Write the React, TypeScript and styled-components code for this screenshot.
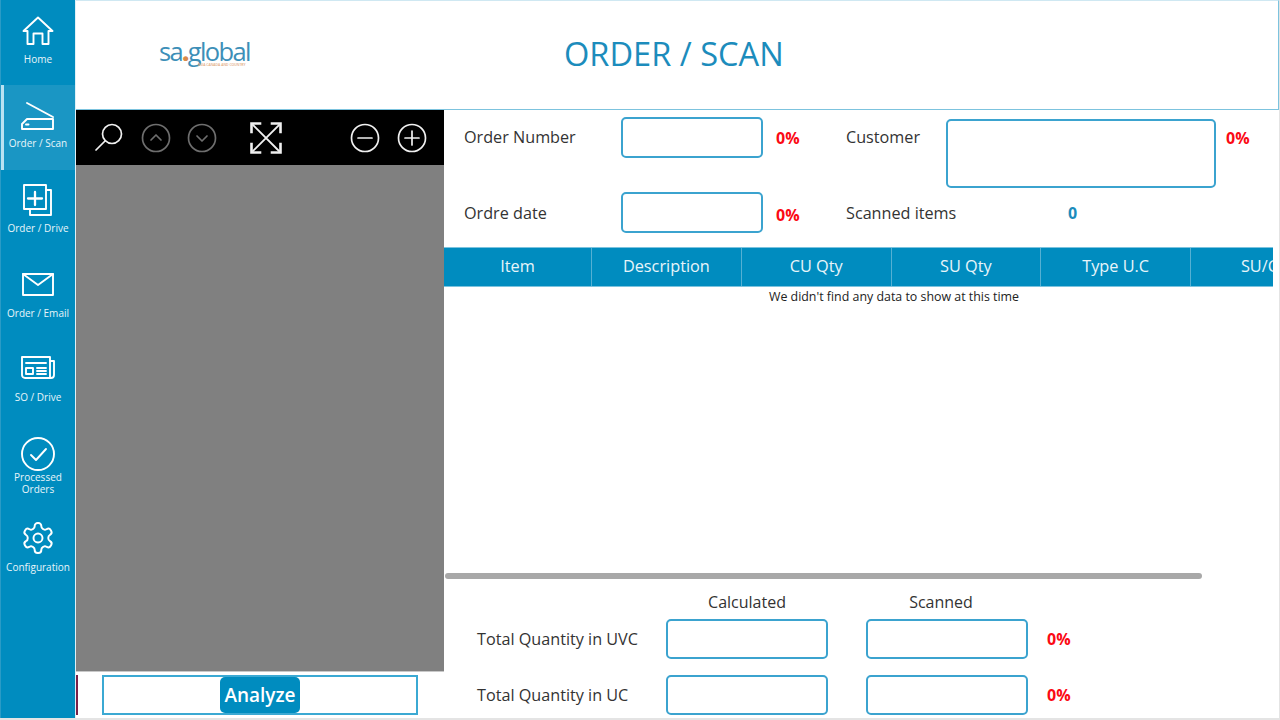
import React from "react";
import styled, { createGlobalStyle } from "styled-components";

const Global = createGlobalStyle`
  html, body { margin: 0; padding: 0; width: 1280px; height: 720px; overflow: hidden; background: #fff; }
  * { box-sizing: border-box; }
  body { font-family: "Open Sans", "Liberation Sans", sans-serif; }
`;

const Page = styled.div`
  width: 1280px; height: 720px; display: grid; grid-template-columns: 76px 1fr; overflow: hidden;
  border-bottom: 2px solid #e4e4e4; border-right: 1px solid #e4e4e4;
`;
const Sidebar = styled.nav`
  background: #008cbf; display: flex; flex-direction: column; border-left: 1px solid #2a9bc6; border-right: 1px solid #dff0f7;
`;
const NavItem = styled.div<{ $active?: boolean; $top: number }>`
  height: 85px; display: flex; flex-direction: column; align-items: center;
  padding-top: ${p => p.$top}px;
  background: ${p => (p.$active ? "#1a96c4" : "transparent")};
  border-left: 3px solid ${p => (p.$active ? "#b9e2f2" : "transparent")};
  padding-right: 3px;
`;
const NavIcon = styled.svg`
  width: 36px; height: 36px; flex: none; fill: none; stroke: #fff; stroke-width: 1.9; stroke-linejoin: round; stroke-linecap: round;
`;
const NavLabel = styled.span<{ $gap: number }>`
  margin-top: ${p => p.$gap}px;
  color: #e8f5fa; font-size: 10px; line-height: 12px; text-align: center; width: 74px; white-space: pre-line;
`;

const Main = styled.div`
  display: grid; grid-template-rows: 110px 1fr; min-width: 0;
`;
const Header = styled.header`
  display: grid; grid-template-columns: 395px 1fr; align-items: center;
  border: 1px solid #7cc3de; border-left: none; border-top-color: #cfe8f2; background: #fff;
`;
const Logo = styled.div`
  display: flex; flex-direction: column; align-items: flex-start; padding: 0 0 6px 83px;
`;
const LogoMark = styled.div`
  font-size: 25.5px; line-height: 26px; letter-spacing: -1.65px; color: #3d8fb8; font-weight: 500; white-space: nowrap;
`;
const LogoDot = styled.span`color: #d98a4a; font-weight: 800;`;
const LogoTag = styled.div`
  font-size: 3.4px; line-height: 4px; margin: -1px 0 0 39px; color: #e0a77c; white-space: nowrap; font-weight: 600;
`;
const Title = styled.h1`
  margin: 0; font-size: 32.6px; line-height: 44px; font-weight: 400; color: #1c8cbc; white-space: nowrap; padding-left: 93px; padding-bottom: 2px;
`;

const Body = styled.div`
  display: grid; grid-template-columns: 368px 1fr; min-height: 0;
`;
const Viewer = styled.section`
  display: grid; grid-template-rows: 55px 507px 1fr; min-height: 0;
`;
const Toolbar = styled.div`
  background: #000; display: flex; align-items: center; padding: 0 17px 0 19px;
`;
const ToolGroup = styled.div<{ $push?: boolean; $gap: number }>`
  display: flex; align-items: center; gap: ${p => p.$gap}px;
  margin-left: ${p => (p.$push ? "auto" : "0")};
`;
const ExpandWrap = styled.div`margin-left: 33px; display: flex;`;
const ToolIcon = styled.svg<{ $dim?: boolean }>`
  width: 30px; height: 30px; flex: none; fill: none; stroke: ${p => (p.$dim ? "#6e6e6e" : "#f0f0f0")}; stroke-width: 1.7; stroke-linecap: round; stroke-linejoin: round;
`;
const ExpandIcon = styled.svg`
  width: 32px; height: 32px; flex: none; fill: none; stroke: #f0f0f0; stroke-width: 1.8; stroke-linecap: square; stroke-linejoin: miter;
`;
const Canvas = styled.div`background: #808080; border-bottom: 1px solid #c8c8c8;`;
const ViewerFooter = styled.div`
  display: flex; align-items: flex-start; padding-top: 3px;
`;
const MaroonEdge = styled.div`width: 2px; height: 40px; background: #7a2148; flex: none;`;
const AnalyzeBox = styled.div`
  margin-left: 24px; width: 316px; height: 40px; border: 2px solid #3ba9d3; display: flex; justify-content: center; align-items: center;
`;
const AnalyzeButton = styled.button`
  width: 80px; height: 36px; border: none; border-radius: 5px; background: #008cbf; color: #fff;
  font-family: inherit; font-weight: 600; font-size: 19px; line-height: 24px; padding: 0;
`;

const Right = styled.section`
  display: flex; flex-direction: column; min-width: 0; min-height: 0;
`;
const Form = styled.div`
  height: 137px; flex: none; padding: 7px 0 0 20px; display: grid;
  grid-template-columns: 157px 142px 83px 100px 270px 1fr; grid-template-rows: 41px 41px; row-gap: 34px;
`;
const FieldLabel = styled.div<{ $lift?: number }>`
  font-size: 16.2px; line-height: 22px; color: #333; align-self: center; white-space: nowrap;
  margin-bottom: ${p => p.$lift ?? 0}px;
`;
const TextBox = styled.div<{ $tall?: boolean }>`
  height: ${p => (p.$tall ? "69px" : "41px")};
  margin-top: ${p => (p.$tall ? "2px" : "0")};
  border: 2px solid #3ba3cf; border-radius: 5px; background: #fff;
`;
const Percent = styled.div<{ $indent?: number; $drop?: number }>`
  color: #fb0a14; font-weight: 700; font-size: 16px; line-height: 22px; align-self: center; white-space: nowrap;
  padding-left: ${p => p.$indent ?? 13}px;
  margin-top: ${p => p.$drop ?? 0}px;
`;
const Count = styled.div`
  color: #1c8cbc; font-weight: 700; font-size: 16px; line-height: 22px; align-self: center; padding-left: 122px;
`;

const TableArea = styled.div`
  flex: none; width: 829px; height: 338px; overflow: hidden; position: relative;
`;
const TableInner = styled.div`width: 900px;`;
const HeaderRow = styled.div`
  display: grid; grid-template-columns: 148px repeat(5, 149.75px); height: 40px; background: #008cbf; border-top: 1px solid #7cc3de; border-bottom: 1px solid #7cc3de;
`;
const HeaderCell = styled.div`
  color: #e8f5fa; font-size: 16.3px; line-height: 36px; text-align: center; border-right: 1px solid #55b0d3; white-space: nowrap; overflow: hidden;
`;
const EmptyNote = styled.div`
  font-size: 12.4px; line-height: 20px; color: #222; text-align: center;
`;
const ScrollThumb = styled.div`
  position: absolute; left: 1px; top: 326px; width: 757px; height: 6px; border-radius: 3px; background: #a8a8a8;
`;

const Totals = styled.div`
  flex: 1; display: flex; flex-direction: column; gap: 16px; padding: 6px 0 0 33px;
`;
const TotalsGrid = styled.div<{ $head?: boolean }>`
  display: grid; grid-template-columns: 189px 162px 38px 162px 1fr; align-items: center;
  height: ${p => (p.$head ? "22px" : "40px")};
  margin-bottom: ${p => (p.$head ? "-10px" : "0")};
`;
const TotalsHead = styled.div<{ $shift?: number }>`
  font-size: 16px; line-height: 22px; color: #333; text-align: center; padding-right: ${p => p.$shift ?? 0}px; white-space: nowrap;
`;
const TotalLabel = styled.div`
  font-size: 16.2px; line-height: 22px; color: #333; white-space: nowrap;
`;
const Spacer = styled.div``;
const SmallBox = styled.div`
  height: 40px; border: 2px solid #3ba3cf; border-radius: 5px; background: #fff;
`;

function Home() {
  return <NavIcon viewBox="0 0 36 36"><path d="M18 4.5 3.5 18H7.5V31H13.5V20.5H22.5V31H28.5V18H32.5Z" /></NavIcon>;
}
function Scan() {
  return <NavIcon viewBox="0 0 36 36"><path d="M7 5 33 19" /><path d="M7 21H33V31H2V26Z" /><path d="M6 26.5h2.5" /></NavIcon>;
}
function Drive() {
  return <NavIcon viewBox="0 0 36 36"><path d="M4 2H26V26H4Z" /><path d="M26 7H31V32H10V26" /><path d="M15 9V22M8 15.5H22" strokeWidth="2.3" /></NavIcon>;
}
function Mail() {
  return <NavIcon viewBox="0 0 36 36"><path d="M3 6H33V27H3Z" /><path d="M3 6 18 17 33 6" /></NavIcon>;
}
function News() {
  return <NavIcon viewBox="0 0 36 36"><path d="M2 6H30V27H5A3 3 0 0 1 2 24Z" /><path d="M30 10H34V24A3 3 0 0 1 31 27H30" /><path d="M6 12H26" /><path d="M6 17H13V23H6Z" /><path d="M17 17H26M17 20H26M17 23H26" /></NavIcon>;
}
function Check() {
  return <NavIcon viewBox="0 0 36 36"><circle cx="18" cy="18" r="16" /><path d="M11 19l5 5 10-11" /></NavIcon>;
}
function Gear() {
  return <NavIcon viewBox="0 0 24 24" style={{ strokeWidth: 1.3 }}><path d="M12.22 2h-.44a2 2 0 0 0-2 2v.18a2 2 0 0 1-1 1.73l-.43.25a2 2 0 0 1-2 0l-.15-.08a2 2 0 0 0-2.73.73l-.22.38a2 2 0 0 0 .73 2.73l.15.1a2 2 0 0 1 1 1.72v.51a2 2 0 0 1-1 1.74l-.15.09a2 2 0 0 0-.73 2.73l.22.38a2 2 0 0 0 2.73.73l.15-.08a2 2 0 0 1 2 0l.43.25a2 2 0 0 1 1 1.73V20a2 2 0 0 0 2 2h.44a2 2 0 0 0 2-2v-.18a2 2 0 0 1 1-1.73l.43-.25a2 2 0 0 1 2 0l.15.08a2 2 0 0 0 2.73-.73l.22-.39a2 2 0 0 0-.73-2.73l-.15-.08a2 2 0 0 1-1-1.74v-.5a2 2 0 0 1 1-1.74l.15-.09a2 2 0 0 0 .73-2.73l-.22-.38a2 2 0 0 0-2.73-.73l-.15.08a2 2 0 0 1-2 0l-.43-.25a2 2 0 0 1-1-1.73V4a2 2 0 0 0-2-2z" /><circle cx="12" cy="12" r="3" /></NavIcon>;
}

const nav = [
  { label: "Home", icon: <Home />, top: 13, gap: 4 },
  { label: "Order / Scan", icon: <Scan />, active: true, top: 13, gap: 3 },
  { label: "Order / Drive", icon: <Drive />, top: 13, gap: 3 },
  { label: "Order / Email", icon: <Mail />, top: 13, gap: 3 },
  { label: "SO / Drive", icon: <News />, top: 11, gap: 4 },
  { label: "Processed\nOrders", icon: <Check />, top: 11, gap: -1 },
  { label: "Configuration", icon: <Gear />, top: 10, gap: 5 },
];
const columns = ["Item", "Description", "CU Qty", "SU Qty", "Type U.C", "SU/CU"];
const totals = ["Total Quantity in UVC", "Total Quantity in UC"];

export default function App() {
  return (
    <Page>
      <Global />
      <Sidebar>
        {nav.map(n => (
          <NavItem key={n.label} $active={n.active} $top={n.top}>
            {n.icon}
            <NavLabel $gap={n.gap}>{n.label}</NavLabel>
          </NavItem>
        ))}
      </Sidebar>
      <Main>
        <Header>
          <Logo>
            <LogoMark>sa<LogoDot>.</LogoDot>global</LogoMark>
            <LogoTag>ASIA CANADA AND COUNTRY</LogoTag>
          </Logo>
          <Title>ORDER / SCAN</Title>
        </Header>
        <Body>
          <Viewer>
            <Toolbar>
              <ToolGroup $gap={16}>
                <ToolIcon viewBox="0 0 30 30"><circle cx="17" cy="11" r="9.5" /><path d="M10 18 1 27" /></ToolIcon>
                <ToolIcon viewBox="0 0 30 30" $dim><circle cx="15" cy="15" r="13.5" /><path d="M10 17l5-5 5 5" /></ToolIcon>
                <ToolIcon viewBox="0 0 30 30" $dim><circle cx="15" cy="15" r="13.5" /><path d="M10 13l5 5 5-5" /></ToolIcon>
              </ToolGroup>
              <ExpandWrap>
                <ExpandIcon viewBox="0 0 32 32">
                  <path d="M3 3l26 26M29 3 3 29" />
                  <path d="M1.5 10v-8.500h8.500M22 1.500h8.500V10M1.500 22v8.500H10M30.500 22v8.500H22" strokeWidth="2.6" />
                </ExpandIcon>
              </ExpandWrap>
              <ToolGroup $push $gap={17}>
                <ToolIcon viewBox="0 0 30 30"><circle cx="15" cy="15" r="13.5" /><path d="M8 15h14" /></ToolIcon>
                <ToolIcon viewBox="0 0 30 30"><circle cx="15" cy="15" r="13.5" /><path d="M8 15h14M15 8v14" /></ToolIcon>
              </ToolGroup>
            </Toolbar>
            <Canvas />
            <ViewerFooter>
              <MaroonEdge />
              <AnalyzeBox><AnalyzeButton>Analyze</AnalyzeButton></AnalyzeBox>
            </ViewerFooter>
          </Viewer>
          <Right>
            <Form>
              <FieldLabel $lift={2}>Order Number</FieldLabel>
              <TextBox />
              <Percent>0%</Percent>
              <FieldLabel $lift={2}>Customer</FieldLabel>
              <TextBox $tall />
              <Percent $indent={10}>0%</Percent>
              <FieldLabel>Ordre date</FieldLabel>
              <TextBox />
              <Percent $drop={4}>0%</Percent>
              <FieldLabel>Scanned items</FieldLabel>
              <Count>0</Count>
            </Form>
            <TableArea>
              <TableInner>
                <HeaderRow>
                  {columns.map(c => <HeaderCell key={c}>{c}</HeaderCell>)}
                </HeaderRow>
                <EmptyNote>We didn't find any data to show at this time</EmptyNote>
              </TableInner>
              <ScrollThumb />
            </TableArea>
            <Totals>
              <TotalsGrid $head>
                <Spacer />
                <TotalsHead>Calculated</TotalsHead>
                <Spacer />
                <TotalsHead $shift={12}>Scanned</TotalsHead>
                <Spacer />
              </TotalsGrid>
              {totals.map(t => (
                <TotalsGrid key={t}>
                  <TotalLabel>{t}</TotalLabel>
                  <SmallBox />
                  <Spacer />
                  <SmallBox />
                  <Percent $indent={19}>0%</Percent>
                </TotalsGrid>
              ))}
            </Totals>
          </Right>
        </Body>
      </Main>
    </Page>
  );
}
